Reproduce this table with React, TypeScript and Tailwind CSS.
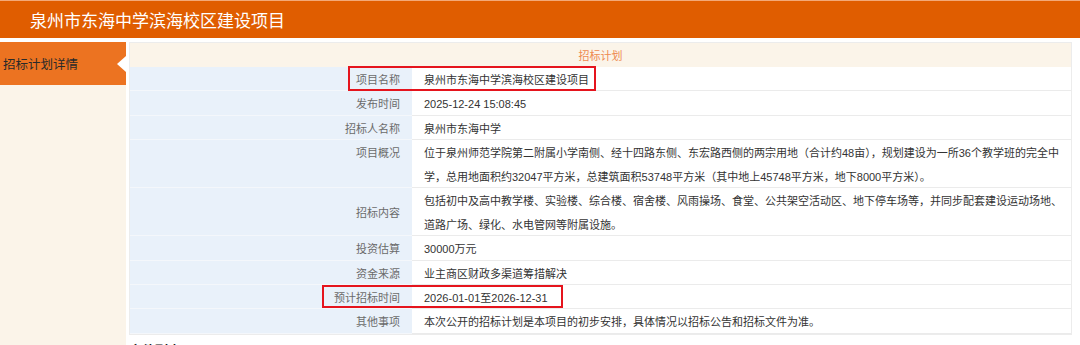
const rows: { label: string; lines: string[]; top?: boolean }[] = [
  { label: '项目名称', lines: ['泉州市东海中学滨海校区建设项目'] },
  { label: '发布时间', lines: ['2025-12-24 15:08:45'] },
  { label: '招标人名称', lines: ['泉州市东海中学'] },
  {
    label: '项目概况',
    top: true,
    lines: [
      '位于泉州师范学院第二附属小学南侧、经十四路东侧、东宏路西侧的两宗用地（合计约48亩），规划建设为一所36个教学班的完全中',
      '学，总用地面积约32047平方米，总建筑面积53748平方米（其中地上45748平方米，地下8000平方米）。',
    ],
  },
  {
    label: '招标内容',
    lines: [
      '包括初中及高中教学楼、实验楼、综合楼、宿舍楼、风雨操场、食堂、公共架空活动区、地下停车场等，并同步配套建设运动场地、',
      '道路广场、绿化、水电管网等附属设施。',
    ],
  },
  { label: '投资估算', lines: ['30000万元'] },
  { label: '资金来源', lines: ['业主商区财政多渠道筹措解决'] },
  { label: '预计招标时间', lines: ['2026-01-01至2026-12-31'] },
  { label: '其他事项', lines: ['本次公开的招标计划是本项目的初步安排，具体情况以招标公告和招标文件为准。'] },
];

export default function App() {
  return (
    <div className="relative w-[1080px] h-[345px] overflow-hidden bg-white font-['Liberation_Sans','Noto_Sans_CJK_SC',sans-serif]">
      {/* Top bar */}
      <header className="h-[38px] bg-[#e05d00] border-t border-[#f3a978] flex items-center pl-[30px]">
        <h1 className="text-[17px] text-white font-['Noto_Sans_CJK_SC',sans-serif] leading-none">
          泉州市东海中学滨海校区建设项目
        </h1>
      </header>

      <div className="flex mt-[4px] h-[303px]">
        {/* Sidebar */}
        <aside className="w-[126px] bg-[#fbf4e9] shrink-0">
          <div className="relative h-[43px] bg-[#ec7321] flex items-center pl-[3px]">
            <span className="text-[12.5px] text-[#2a2a2a] font-['Noto_Sans_CJK_SC',sans-serif] translate-y-[1px]">招标计划详情</span>
            <span className="absolute right-0 top-[14px] w-0 h-0 border-y-[8px] border-y-transparent border-r-[9px] border-r-white" />
          </div>
        </aside>

        {/* Main table */}
        <main className="ml-[3px] w-[943px]">
          <div className="border border-[#ececec]">
            <div className="h-[24px] bg-[#fbf4e9] flex items-center justify-center text-[11px] text-[#ee8a50]">
              <span className="translate-y-[1px]">招标计划</span>
            </div>
            {rows.map((r) => (
              <div key={r.label} className="flex text-[11px]">
                <div
                  className={`w-[282px] shrink-0 bg-[#e9f1fa] border-b border-[#f4f7fb] flex justify-end pr-3 text-[#6b6b6b] ${
                    r.top ? 'items-start' : 'items-center'
                  }`}
                >
                  <span className="leading-[23.4px] translate-y-[2px]">{r.label}</span>
                </div>
                <div className="flex-1 border-b border-[#ebebeb] pl-3 text-[#333] whitespace-nowrap">
                  {r.lines.map((l, i) => (
                    <div key={i} className="leading-[23.4px] h-[23.4px] translate-y-[2px]">
                      {l}
                    </div>
                  ))}
                  {r.lines.length > 1 && <div className="h-[0.2px]" />}
                </div>
              </div>
            ))}
          </div>
          <div className="mt-[5px] text-[13px] font-bold text-[#222] font-['Noto_Sans_CJK_SC',sans-serif]">文件列表</div>
        </main>
      </div>

      {/* Red annotation boxes */}
      <div className="absolute left-[348px] top-[66px] w-[248px] h-[25px] border-2 border-[#e5141d]" />
      <div className="absolute left-[322px] top-[285px] w-[241px] h-[23px] border-2 border-[#e5141d]" />
    </div>
  );
}
